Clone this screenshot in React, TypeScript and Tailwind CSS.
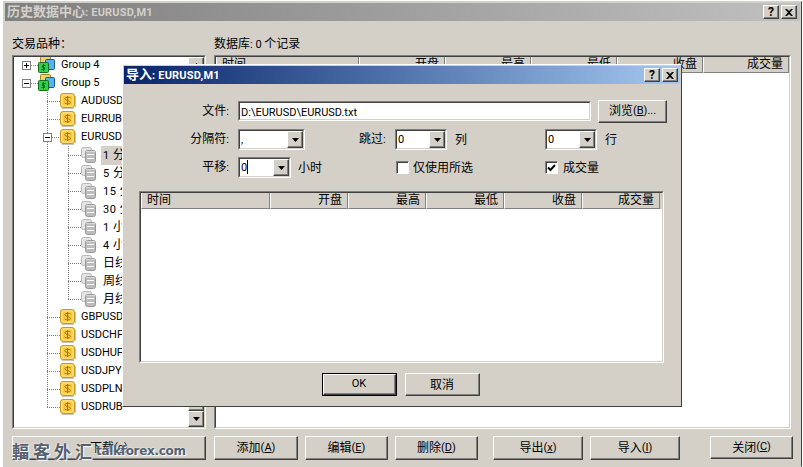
import React from 'react';

const FONT = 'Roboto, "Noto Sans CJK SC", sans-serif';

// Latin runs are set a point smaller than the CJK ones, like the old Tahoma/SimSun mix
const Mix: React.FC<{ text: string; latin?: string }> = ({ text, latin = 'text-[11px]' }) => (
  <>
    {text.split(/([\x00-\x7f]+)/).filter(Boolean).map((part, i) =>
      /^[\x00-\x7f]+$/.test(part) ? <span key={i} className={`${latin} whitespace-pre`}>{part}</span> : <span key={i}>{part}</span>,
    )}
  </>
);

// ─── Win2k bevels ──────────────────────────────────────────────────────────────

const Raised: React.FC<{ className?: string; children?: React.ReactNode; dflt?: boolean }> = ({ className = '', children, dflt }) => (
  <div className={`${dflt ? 'border border-black' : ''} ${className} flex`}>
    <div className="flex-1 flex items-center justify-center bg-[#d4d0c8] border border-white border-r-[#404040] border-b-[#404040] shadow-[inset_-1px_-1px_0_#808080] text-[12px] text-black">
      {children}
    </div>
  </div>
);

const Sunken: React.FC<{ className?: string; children?: React.ReactNode }> = ({ className = '', children }) => (
  <div className={`border border-[#808080] border-r-white border-b-white ${className}`}>
    <div className="w-full h-full bg-white border border-[#404040] border-r-[#d4d0c8] border-b-[#d4d0c8] overflow-hidden relative">
      {children}
    </div>
  </div>
);

const Arrow: React.FC = () => (
  <svg width="7" height="4" viewBox="0 0 7 4"><path d="M0 0h7L3.5 4z" fill="#000" /></svg>
);

const Combo: React.FC<{ value: string; className?: string; caret?: boolean }> = ({ value, className = '', caret }) => (
  <Sunken className={`h-[21px] ${className}`}>
    <div className="flex h-full">
      <span className="flex-1 pl-[1px] text-[11px] leading-[17px] text-black">
        {value}
        {caret && <span className="inline-block w-px h-[14px] bg-black align-[-3px]" />}
      </span>
      <Raised className="w-[16px]"><Arrow /></Raised>
    </div>
  </Sunken>
);

const TitleButtons: React.FC<{ pad: string }> = ({ pad }) => (
  <div className={`flex gap-[2px] ${pad}`}>
    <Raised className="w-[16px] h-[14px]"><span className="text-[12px] font-bold leading-none">?</span></Raised>
    <Raised className="w-[16px] h-[14px]">
      <svg width="8" height="7" viewBox="0 0 8 7"><path d="M0 0h2l2 2 2-2h2L5 3.5 8 7H6L4 5 2 7H0l3-3.5z" fill="#000" /></svg>
    </Raised>
  </div>
);

// ─── Tree icons ────────────────────────────────────────────────────────────────

const GroupIcon: React.FC = () => (
  <svg width="18" height="18" viewBox="0 0 18 18" className="shrink-0">
    <rect x="2.5" y="0.5" width="10" height="6" rx="1" fill="#f0d070" stroke="#a08030" />
    <rect x="7.5" y="3.5" width="9" height="10" rx="1" fill="#5ab0f0" stroke="#1a5a90" />
    <rect x="0.5" y="6.5" width="10" height="10" rx="1" fill="#30d040" stroke="#107020" />
    <path d="M5.5 8v7M7.5 9.5H4.5v2h2v2H3.5" stroke="#063" fill="none" />
  </svg>
);

const CoinIcon: React.FC = () => (
  <svg width="16" height="16" viewBox="0 0 16 16" className="shrink-0">
    <path d="M2 15.5h12M15.5 3v11" stroke="#c8c4b8" />
    <rect x="0.5" y="0.5" width="14" height="14" rx="2.5" fill="#fbd35a" stroke="#c89a20" />
    <rect x="2" y="2" width="11" height="11" rx="2" fill="#f8c840" stroke="#fde58c" />
    <path d="M7.5 3v9M10.5 5C9.5 4 4.8 3.8 4.8 5.8S10.5 7.4 10.5 9.4 5.500 11 4.500 10" stroke="#a87810" fill="none" />
  </svg>
);

const DbIcon: React.FC = () => (
  <svg width="16" height="16" viewBox="0 0 16 16" className="shrink-0">
    <rect x="0.5" y="0.500" width="10" height="10" rx="2" fill="#e4e4e4" stroke="#b8b8b8" />
    <rect x="4.500" y="3.500" width="10" height="12" rx="2" fill="#bcbcbc" stroke="#989898" />
    <path d="M5 4.500h9" stroke="#d8d8d8" />
    <path d="M6 7.500h7M6 11.500h7" stroke="#fff" />
  </svg>
);

// Connector lines drawn per row; box = expand/collapse toggle
const Lead: React.FC<{ width: number; lines: number[]; stub: number; last?: boolean; box?: '+' | '-'; boxX?: number }> = ({ width, lines, stub, last, box, boxX }) => (
  <svg width={width} height="18" className="shrink-0">
    {lines.map((x) => (
      <path key={x} d={`M${x + 0.5} 0V${last && x === stub ? 9 : 18}`} stroke="#808080" strokeDasharray="1 1" />
    ))}
    <path d={`M${stub} 9.5H${width}`} stroke="#808080" strokeDasharray="1 1" />
    {box && boxX !== undefined && (
      <g>
        <rect x={boxX - 4 + 0.5} y="5.5" width="8" height="8" fill="#fff" stroke="#808080" />
        <path d={box === '+' ? `M${boxX - 2} 9.5h5M${boxX + 0.5} 7v5` : `M${boxX - 2} 9.5h5`} stroke="#000" />
      </g>
    )}
  </svg>
);

const symbolsTop = ['AUDUSD', 'EURRUB'];
const periods = ['1 分钟', '5 分钟', '15 分钟', '30 分钟', '1 小时', '4 小时', '日线', '周线', '月线'];
const symbolsBottom = ['GBPUSD', 'USDCHF', 'USDHUF', 'USDJPY', 'USDPLN', 'USDRUB'];

const Tree: React.FC = () => (
  <div className="flex flex-col -mt-[1px] text-[11px] leading-[18px] text-black whitespace-nowrap">
    <div className="flex h-[18px] items-center">
      <Lead width={24} lines={[]} stub={13} box="+" boxX={12} />
      <GroupIcon />
      <span className="ml-[5px]">Group 4</span>
    </div>
    <div className="flex h-[18px] items-center">
      <Lead width={24} lines={[]} stub={13} box="-" boxX={12} />
      <GroupIcon />
      <span className="ml-[5px]">Group 5</span>
    </div>
    {symbolsTop.map((s) => (
      <div key={s} className="flex h-[18px] items-center">
        <Lead width={46} lines={[33]} stub={33} />
        <CoinIcon />
        <span className="ml-[5px]">{s}</span>
      </div>
    ))}
    <div className="flex h-[18px] items-center">
      <Lead width={46} lines={[33]} stub={38} box="-" boxX={33} />
      <CoinIcon />
      <span className="ml-[5px]">EURUSD</span>
    </div>
    {periods.map((p, i) => (
      <div key={p} className="flex h-[18px] items-center">
        <Lead width={67} lines={[33, 54]} stub={54} last={i === periods.length - 1} />
        <DbIcon />
        <span className={`ml-[4px] px-[2px] text-[12px] ${i === 0 ? 'bg-[#d4d0c8]' : ''}`}>
          <Mix text={p} latin="text-[11px] tracking-[0.5px]" />
        </span>
      </div>
    ))}
    {symbolsBottom.map((s, i) => (
      <div key={s} className="flex h-[18px] items-center">
        <Lead width={46} lines={[33]} stub={33} last={i === symbolsBottom.length - 1} />
        <CoinIcon />
        <span className="ml-[5px]">{s}</span>
      </div>
    ))}
  </div>
);

const ScrollBar: React.FC = () => (
  <div className="w-[16px] h-full flex flex-col bg-[#eceae6] shrink-0">
    <Raised className="h-[16px]"><span className="rotate-180 flex"><Arrow /></span></Raised>
    <div className="flex-1" />
    <Raised className="h-[20px]" />
    <Raised className="h-[16px]"><Arrow /></Raised>
  </div>
);

const Header: React.FC<{ widths: number[]; height: string }> = ({ widths, height }) => {
  const labels = ['时间', '开盘', '最高', '最低', '收盘', '成交量'];
  return (
    <div className={`flex ${height} bg-[#d4d0c8]`}>
      {labels.map((l, i) => (
        <div
          key={l}
          style={{ width: widths[i] }}
          className={`shrink-0 border-l border-l-white border-r border-r-[#808080] border-b border-b-[#808080] px-[5px] text-[12px] leading-[15px] text-black ${i === 0 ? 'text-left' : 'text-right'}`}
        >
          {l}
        </div>
      ))}
    </div>
  );
};

const U: React.FC<{ children: React.ReactNode }> = ({ children }) => (
  <span className="text-[11px]">(<u>{children}</u>)</span>
);

// ─── App ───────────────────────────────────────────────────────────────────────

const App: React.FC = () => (
  <div className="relative w-[803px] h-[467px] bg-white overflow-hidden" style={{ fontFamily: FONT }}>
    {/* Main window */}
    <div className="ml-[3px] w-[799px] mt-[1px] h-[466px] border border-[#d4d0c8] border-r-[#404040] bg-[#d4d0c8] pt-[1px] pr-[1px] pb-0 pl-[1px]">
      <div className="flex h-[18px] items-center justify-between bg-gradient-to-r from-[#808080] to-[#c0c0c0]">
        <span className="pl-[2px] text-[13px] font-bold text-[#d4d0c8]">
          <Mix text="历史数据中心: EURUSD,M1" latin="text-[11px] tracking-[0.2px]" />
        </span>
        <TitleButtons pad="pr-[3px]" />
      </div>

      <div className="flex gap-[8px] pl-[7px] pr-[9px] pt-[14px]">
        <div className="w-[194px] flex flex-col">
          <div className="h-[20px] text-[12px] leading-[18px] text-black">交易品种：</div>
          <Sunken className="h-[374px]">
            <div className="flex h-full">
              <div className="flex-1 min-w-0 overflow-hidden"><Tree /></div>
              <ScrollBar />
            </div>
          </Sunken>
        </div>
        <div className="flex-1 flex flex-col">
          <div className="h-[20px] text-[12px] leading-[18px] text-black"><Mix text="数据库: 0 个记录" /></div>
          <Sunken className="h-[374px]">
            <Header widths={[143, 86, 86, 86, 86, 86]} height="h-[16px]" />
          </Sunken>
        </div>
      </div>

      <div className="flex pl-[7px] pt-[7px]">
        <Raised className="w-[194px] h-[24px]">下载<U>o</U></Raised>
        <Raised className="w-[84px] h-[24px] ml-[8px]">添加<U>A</U></Raised>
        <Raised className="w-[83px] h-[24px] ml-[7px]">编辑<U>E</U></Raised>
        <Raised className="w-[83px] h-[24px] ml-[7px]">删除<U>D</U></Raised>
        <Raised className="w-[90px] h-[24px] ml-[15px]">导出<U>x</U></Raised>
        <Raised className="w-[90px] h-[24px] ml-[7px]">导入<U>I</U></Raised>
        <Raised className="w-[83px] h-[23px] ml-[30px]">关闭<U>C</U></Raised>
      </div>
    </div>

    {/* Import dialog */}
    <div className="absolute left-[122px] top-[64px] w-[560px] h-[343px] bg-[#d4d0c8] border border-white border-r-[#404040] border-b-[#404040] p-[1px] text-[12px] text-black">
      <div className="flex h-[18px] items-center justify-between bg-gradient-to-r from-[#0a246a] to-[#a6caf0]">
        <span className="pl-[2px] text-[13px] font-bold text-white">
          <Mix text="导入: EURUSD,M1" latin="text-[11px] tracking-[0.2px]" />
        </span>
        <TitleButtons pad="pr-[2px]" />
      </div>

      <div className="pl-[16px] pt-[16px]">
        <div className="flex h-[22px] items-center">
          <span className="w-[90px] pr-[1px] text-right"><Mix text="文件:" /></span>
          <Sunken className="ml-[8px] w-[353px] h-[20px]">
            <span className="pl-[1px] text-[11px] leading-[16px]">D:\EURUSD\EURUSD.txt</span>
          </Sunken>
          <Raised className="ml-[7px] w-[69px] h-[23px]">浏览<U>B</U><span className="text-[11px]">...</span></Raised>
        </div>
        <div className="flex h-[21px] items-center mt-[7px]">
          <span className="w-[90px] pr-[1px] text-right"><Mix text="分隔符:" /></span>
          <Combo value="," className="ml-[8px] w-[67px]" />
          <span className="ml-[54px] w-[27px] whitespace-nowrap"><Mix text="跳过:" /></span>
          <Combo value="0" className="ml-[9px] w-[52px]" />
          <span className="ml-[8px] w-[90px]">列</span>
          <Combo value="0" className="w-[52px]" />
          <span className="ml-[8px]">行</span>
        </div>
        <div className="flex h-[21px] items-center mt-[7px]">
          <span className="w-[90px] pr-[1px] text-right"><Mix text="平移:" /></span>
          <Combo value="0" caret className="ml-[8px] w-[53px]" />
          <span className="ml-[7px] w-[98px]">小时</span>
          <div className="w-[13px] h-[13px] bg-white border border-[#808080] border-r-white border-b-white shadow-[inset_1px_1px_0_#404040]" />
          <span className="ml-[4px] w-[132px]">仅使用所选</span>
          <div className="w-[13px] h-[13px] bg-white border border-[#808080] border-r-white border-b-white shadow-[inset_1px_1px_0_#404040] flex items-center justify-center">
            <svg width="9" height="8" viewBox="0 0 9 8"><path d="M1 3.500l2.500 2.500L8 1" stroke="#000" strokeWidth="2" fill="none" /></svg>
          </div>
          <span className="ml-[5px]">成交量</span>
        </div>
      </div>

      <div className="pl-[15px] pt-[13px]">
        <Sunken className="w-[525px] h-[172px]">
          <Header widths={[129, 78, 78, 78, 78, 78]} height="h-[16px]" />
        </Sunken>
      </div>

      <div className="flex justify-center gap-[8px] pt-[10px] pr-[3px]">
        <Raised dflt className="w-[75px] h-[23px]"><span className="text-[11px]">OK</span></Raised>
        <Raised className="w-[75px] h-[23px]">取消</Raised>
      </div>
    </div>

    {/* Watermark */}
    <div className="absolute left-[12px] top-[440px] flex items-end font-bold text-[#56616f] [text-shadow:0_0_2px_#fff,1px_1px_1px_#fff] pointer-events-none">
      <span className="text-[17px] leading-[21px] tracking-[4px]" style={{ fontFamily: '"Noto Sans CJK TC", sans-serif' }}>輻客外汇</span>
      <span className="text-[12px] leading-[20px] tracking-[-0.3px]" style={{ fontFamily: '"DejaVu Sans", sans-serif' }}>talkforex.com</span>
    </div>
  </div>
);

export default App;
